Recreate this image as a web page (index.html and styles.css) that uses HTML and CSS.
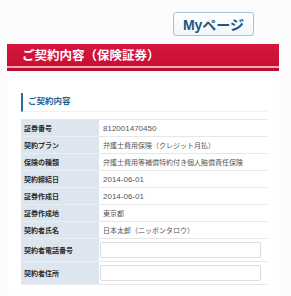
FILE: index.html
```html
<!DOCTYPE html>
<html lang="ja">
<head>
    <meta charset="UTF-8">
    <title>ご契約内容（保険証券）</title>
    <link rel="stylesheet" href="styles.css">
</head>
<body>
    <div class="container">
        <div class="top-bar">
            <a class="mypage-btn" href="#">Myページ</a>
        </div>
        <h1 class="page-title">ご契約内容（保険証券）</h1>
        <div class="panel">
            <h2 class="section-title">ご契約内容</h2>
            <table class="info-table">
                <tr><th>証券番号</th><td class="num">812001470450</td></tr>
                <tr><th>契約プラン</th><td>弁護士費用保険（クレジット月払）</td></tr>
                <tr><th>保険の種類</th><td>弁護士費用等補償特約付き個人賠償責任保険</td></tr>
                <tr><th>契約締結日</th><td class="num">2014-06-01</td></tr>
                <tr><th>証券作成日</th><td class="num">2014-06-01</td></tr>
                <tr><th>証券作成地</th><td>東京都</td></tr>
                <tr><th>契約者氏名</th><td>日本太郎（ニッポンタロウ）</td></tr>
                <tr class="input-row"><th>契約者電話番号</th><td><input type="text"></td></tr>
                <tr class="input-row"><th>契約者住所</th><td><input type="text"></td></tr>
            </table>
        </div>
    </div>
</body>
</html>
```

FILE: styles.css
```css
body {
    margin: 0;
    background-color: #fcfcfc;
    color: #333;
    font-family: "Liberation Sans", "Noto Sans CJK JP", sans-serif;
}
.container {
    width: 272px;
    margin-left: 7px;
}
.top-bar {
    display: flex;
    justify-content: flex-end;
    padding: 12px 25px 0 0;
    height: 32px;
}
.mypage-btn {
    display: flex;
    align-items: center;
    justify-content: center;
    box-sizing: border-box;
    width: 81px;
    height: 24px;
    border: 1px solid #9fc4dc;
    border-radius: 3px;
    background: linear-gradient(#ffffff, #f1f6fa);
    color: #1d5687;
    font-size: 14px;
    font-weight: bold;
    text-decoration: none;
}
.page-title {
    margin: 0;
    box-sizing: border-box;
    height: 27px;
    padding: 5px 0 0 15px;
    background:
        linear-gradient(to bottom,
            #d6163f 0px, #c90f34 22px,
            #f4a4b2 22px, #f4a4b2 24px,
            #b80b2d 24px, #b80b2d 27px);
    color: #fff;
    font-size: 12.5px;
    font-weight: bold;
    line-height: 15px;
}
.panel {
    background-color: #fff;
    padding: 22px 12px 10px 14px;
}
.section-title {
    margin: 0 0 7px;
    padding: 0 0 2px 5px;
    height: 16px;
    line-height: 16px;
    border-left: 2px solid #2b6d9c;
    border-bottom: 1px solid #f0f0f0;
    color: #236597;
    font-size: 8.5px;
    font-weight: bold;
}
.info-table {
    width: 246px;
    border-collapse: collapse;
    border-top: 1px solid #e6e6e6;
}
.info-table th {
    width: 75px;
    height: 16px;
    padding: 0 0 0 3px;
    background-color: #dde6ee;
    border-bottom: 1px solid #e8eef3;
    color: #2a2a2a;
    font-size: 7px;
    font-weight: bold;
    text-align: left;
}
.info-table td {
    padding: 0 0 0 4px;
    border-bottom: 1px solid #e6e6e6;
    color: #555;
    font-size: 7px;
}
.info-table td.num {
    font-size: 8px;
}
.info-table .input-row th {
    height: 22px;
}
.info-table input {
    display: block;
    box-sizing: border-box;
    width: 161px;
    height: 16px;
    margin-left: -3px;
    border: 1px solid #dcdcdc;
    border-radius: 2px;
    background-color: #fff;
}
```
